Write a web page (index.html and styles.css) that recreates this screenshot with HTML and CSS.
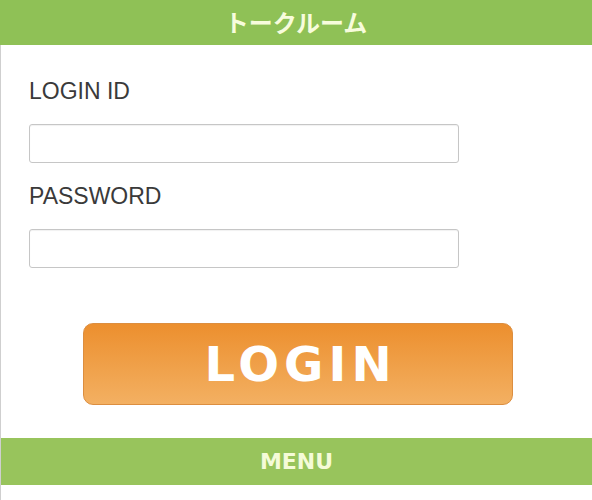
FILE: index.html
```html
<!DOCTYPE html>
<html lang="ja">
<head>
    <meta charset="UTF-8">
    <meta name="viewport" content="width=device-width, initial-scale=1.0">
    <title>トークルーム</title>
    <link rel="stylesheet" href="styles.css">
</head>
<body>
    <h1 class="title-bar">トークルーム</h1>

    <div class="page">
        <form class="login-form">
            <label class="field-label" for="loginId">LOGIN ID</label>
            <input class="field-input" type="text" id="loginId">

            <label class="field-label" for="password">PASSWORD</label>
            <input class="field-input" type="password" id="password">

            <button class="login-button" type="button">LOGIN</button>
        </form>

        <h2 class="menu-bar">MENU</h2>
    </div>
</body>
</html>
```

FILE: styles.css
```css
html, body {
    margin: 0;
    padding: 0;
    background-color: #ffffff;
}
body {
    font-family: 'Liberation Sans', Arial, sans-serif;
    color: #333333;
    min-height: 500px;
}
.title-bar {
    margin: 0;
    height: 45px;
    background-color: #8fc156;
    color: #f7fcdc;
    font-family: 'Noto Sans CJK JP', sans-serif;
    font-size: 24px;
    font-weight: bold;
    line-height: 43px;
    text-align: center;
}
.page {
    border-left: 1px solid #cfcfcf;
    min-height: 455px;
    padding-top: 33px;
    box-sizing: border-box;
}
.login-form {
    display: flex;
    flex-direction: column;
    padding-left: 28px;
}
.field-label {
    font-size: 23px;
    line-height: 26px;
    color: #3a3a3a;
    margin-bottom: 20px;
}
.field-input {
    width: 430px;
    height: 39px;
    box-sizing: border-box;
    border: 1px solid #c6c6c6;
    border-radius: 3px;
    box-shadow: inset 0 1px 1px rgba(0, 0, 0, 0.06);
    background-color: #ffffff;
    margin: 0 0 20px 0;
    padding: 0 8px;
    font-size: 16px;
}
.field-input:last-of-type {
    margin-bottom: 55px;
}
.login-button {
    align-self: flex-start;
    margin-left: 54px;
    width: 430px;
    height: 82px;
    border: 1px solid #dc8e40;
    border-radius: 10px;
    background: linear-gradient(#ec8f2e, #f3b062);
    color: #ffffff;
    font-family: 'DejaVu Sans', Verdana, sans-serif;
    font-size: 48px;
    font-weight: bold;
    letter-spacing: 5px;
    padding: 0 0 0 5px;
    cursor: pointer;
}
.menu-bar {
    margin: 33px 0 0 0;
    height: 47px;
    background-color: #98c45c;
    color: #f5fbd8;
    font-family: 'DejaVu Sans', Verdana, sans-serif;
    font-size: 22px;
    font-weight: bold;
    line-height: 47px;
    text-align: center;
}
```
